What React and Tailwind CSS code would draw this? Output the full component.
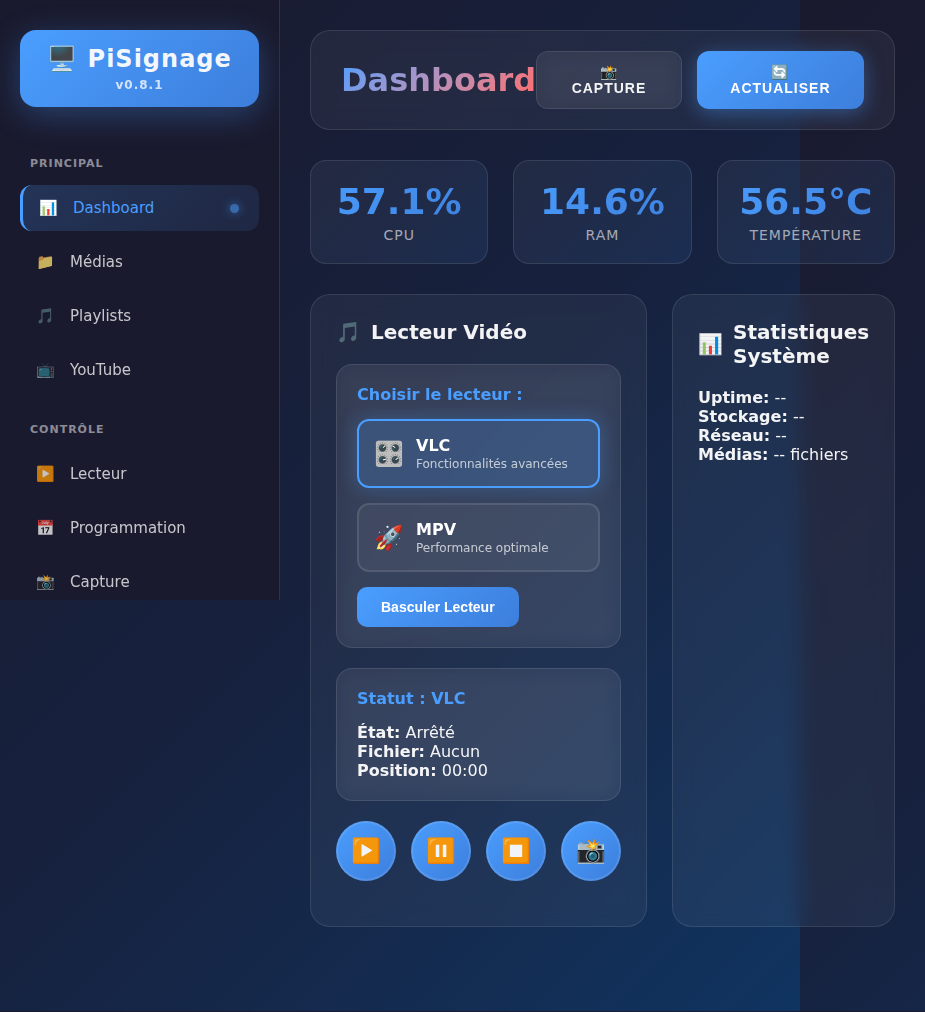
import React from 'react';

const sections = [
  {
    title: 'Principal',
    items: [
      { icon: '📊', label: 'Dashboard', active: true },
      { icon: '📁', label: 'Médias' },
      { icon: '🎵', label: 'Playlists' },
      { icon: '📺', label: 'YouTube' },
    ],
  },
  {
    title: 'Contrôle',
    items: [
      { icon: '▶️', label: 'Lecteur' },
      { icon: '📅', label: 'Programmation' },
      { icon: '📸', label: 'Capture' },
    ],
  },
];

const stats = [
  { value: '57.1%', label: 'CPU' },
  { value: '14.6%', label: 'RAM' },
  { value: '56.5°C', label: 'Température' },
];

const players = [
  { id: 'vlc', icon: '🎛️', name: 'VLC', note: 'Fonctionnalités avancées' },
  { id: 'mpv', icon: '🚀', name: 'MPV', note: 'Performance optimale' },
];

const controls = [
  { icon: '▶️', label: 'Lire' },
  { icon: '⏸️', label: 'Pause' },
  { icon: '⏹️', label: 'Arrêter' },
  { icon: '📸', label: 'Capture' },
];

function NavItem({ icon, label, active }) {
  return (
    <a
      href="#"
      aria-current={active ? 'page' : undefined}
      className={
        active
          ? 'flex h-[46px] items-center gap-[14px] rounded-xl border-l-3 border-[#4a9eff] bg-linear-135 from-[#4a9eff]/20 to-[#4a9eff]/10 px-4 text-[15px] text-[#4a9eff]'
          : 'flex h-[46px] items-center gap-[14px] rounded-xl px-4 text-[15px] text-white opacity-75'
      }
    >
      <span className="w-5">{icon}</span>
      <span className="flex-1">{label}</span>
      {active && (
        <span className="mr-1 size-[9px] rounded-full bg-[#4a9eff] opacity-55 shadow-[0_0_10px_#4a9eff]" />
      )}
    </a>
  );
}

function Sidebar() {
  return (
    <aside className="h-[600px] w-[280px] shrink-0 overflow-hidden border-r border-white/10 bg-[#1a1a2e] px-5 py-[30px]">
      <div className="mb-[50px] rounded-2xl bg-linear-135 from-[#4a9eff] to-[#3d7edb] py-[15px] text-center font-bold tracking-[1px] shadow-[0_8px_32px_rgba(74,158,255,0.3)]">
        <div className="text-2xl leading-[28px]">🖥️ PiSignage</div>
        <div className="mt-[5px] text-xs leading-[14px] opacity-80">v0.8.1</div>
      </div>
      {sections.map((section) => (
        <nav key={section.title} aria-label={section.title} className="mb-[30px]">
          <h2 className="mb-[15px] px-[10px] text-[11px] leading-[13px] font-bold tracking-[1px] text-white/50 uppercase">
            {section.title}
          </h2>
          <div className="flex flex-col gap-2">
            {section.items.map((item) => (
              <NavItem key={item.label} {...item} />
            ))}
          </div>
        </nav>
      ))}
    </aside>
  );
}

function Header() {
  return (
    <header className="flex items-center rounded-[20px] border border-white/10 bg-white/5 px-[30px] py-5 backdrop-blur-[10px]">
      <h1 className="bg-linear-135 from-[#4a9eff] to-[#ff6b6b] bg-clip-text text-[32px] leading-[38px] font-bold text-transparent">
        Dashboard
      </h1>
      <div className="flex flex-1 gap-[15px] font-['Liberation_Sans',Arial,sans-serif] text-sm leading-4 font-bold tracking-[1px]">
        <button className="flex grow flex-col items-center justify-center rounded-xl border border-white/10 bg-white/5 px-[33px] py-3 backdrop-blur-[10px]">
          <span>📸</span>
          <span>CAPTURE</span>
        </button>
        <button className="flex grow flex-col items-center justify-center rounded-xl bg-linear-135 from-[#4a9eff] to-[#3d7edb] px-8 py-[13px] text-white shadow-[0_4px_20px_rgba(74,158,255,0.4)]">
          <span>🔄</span>
          <span>ACTUALISER</span>
        </button>
      </div>
    </header>
  );
}

function StatCard({ value, label }) {
  return (
    <div className="rounded-2xl border border-white/10 bg-linear-135 from-white/5 to-[#4a9eff]/10 py-5 text-center">
      <div className="bg-linear-135 from-[#4a9eff] to-[#3d7edb] bg-clip-text text-4xl leading-[42px] font-bold text-transparent">
        {value}
      </div>
      <div className="mt-1 text-sm leading-4 tracking-[1px] text-white/60 uppercase">{label}</div>
    </div>
  );
}

function Card({ icon, title, children }) {
  return (
    <section className="rounded-[20px] border border-white/10 bg-white/5 p-[25px] backdrop-blur-[10px]">
      <h2 className="mb-5 flex items-center gap-[10px] text-xl leading-6 font-bold">
        <span>{icon}</span>
        <span>{title}</span>
      </h2>
      {children}
    </section>
  );
}

function Panel({ title, children }) {
  return (
    <div className="mb-5 rounded-2xl border border-white/10 bg-white/5 p-5 backdrop-blur-[10px]">
      <h3 className="mb-[15px] leading-[19px] font-bold text-[#4a9eff]">{title}</h3>
      {children}
    </div>
  );
}

function Facts({ rows }) {
  return (
    <div className="leading-[19px]">
      {rows.map(([name, value]) => (
        <p key={name}>
          <strong>{name}:</strong> {value}
        </p>
      ))}
    </div>
  );
}

export default function App() {
  const [player, setPlayer] = React.useState('vlc');
  return (
    <div className="flex min-h-screen items-start bg-linear-135 from-[#1a1a2e] via-[#16213e] to-[#0f3460] bg-size-[800px_1011px] font-['DejaVu_Sans',sans-serif] text-white/95">
      <Sidebar />
      <main className="min-w-0 flex-1 p-[30px]">
        <Header />
        <div className="mt-[30px] grid grid-cols-3 gap-[25px]">
          {stats.map((stat) => (
            <StatCard key={stat.label} {...stat} />
          ))}
        </div>
        <div className="mt-[30px] grid grid-cols-[auto_minmax(0,1fr)] gap-[25px]">
          <Card icon="🎵" title="Lecteur Vidéo">
            <Panel title="Choisir le lecteur :">
              <div className="flex flex-col gap-[15px]">
                {players.map((p) => (
                  <button
                    key={p.id}
                    aria-pressed={player === p.id}
                    onClick={() => setPlayer(p.id)}
                    className={
                      player === p.id
                        ? 'flex items-center gap-3 rounded-xl border-2 border-[#4a9eff] bg-[#4a9eff]/20 p-[15px] text-left text-white shadow-[0_0_20px_rgba(74,158,255,0.3)]'
                        : 'flex items-center gap-3 rounded-xl border-2 border-white/10 bg-white/5 p-[15px] text-left text-white'
                    }
                  >
                    <span className="w-[30px] text-2xl leading-7">{p.icon}</span>
                    <span>
                      <span className="block leading-[19px] font-bold">{p.name}</span>
                      <span className="mt-[2px] block text-xs leading-[14px] opacity-70">{p.note}</span>
                    </span>
                  </button>
                ))}
              </div>
              <button className="mt-[15px] block rounded-[10px] bg-linear-135 from-[#4a9eff] to-[#3d7edb] px-6 py-3 font-['Liberation_Sans',Arial,sans-serif] text-sm leading-4 font-bold text-white">
                Basculer Lecteur
              </button>
            </Panel>
            <Panel title="Statut : VLC">
              <Facts
                rows={[
                  ['État', 'Arrêté'],
                  ['Fichier', 'Aucun'],
                  ['Position', '00:00'],
                ]}
              />
            </Panel>
            <div className="mb-5 flex justify-center gap-[15px]">
              {controls.map((c) => (
                <button
                  key={c.label}
                  aria-label={c.label}
                  className="flex size-[60px] shrink-0 items-center justify-center rounded-full border-2 border-white/10 bg-linear-135 from-[#4a9eff] to-[#3d7edb] bg-origin-border text-2xl"
                >
                  {c.icon}
                </button>
              ))}
            </div>
          </Card>
          <Card icon="📊" title="Statistiques Système">
            <Facts
              rows={[
                ['Uptime', '--'],
                ['Stockage', '--'],
                ['Réseau', '--'],
                ['Médias', '-- fichiers'],
              ]}
            />
          </Card>
        </div>
      </main>
    </div>
  );
}
